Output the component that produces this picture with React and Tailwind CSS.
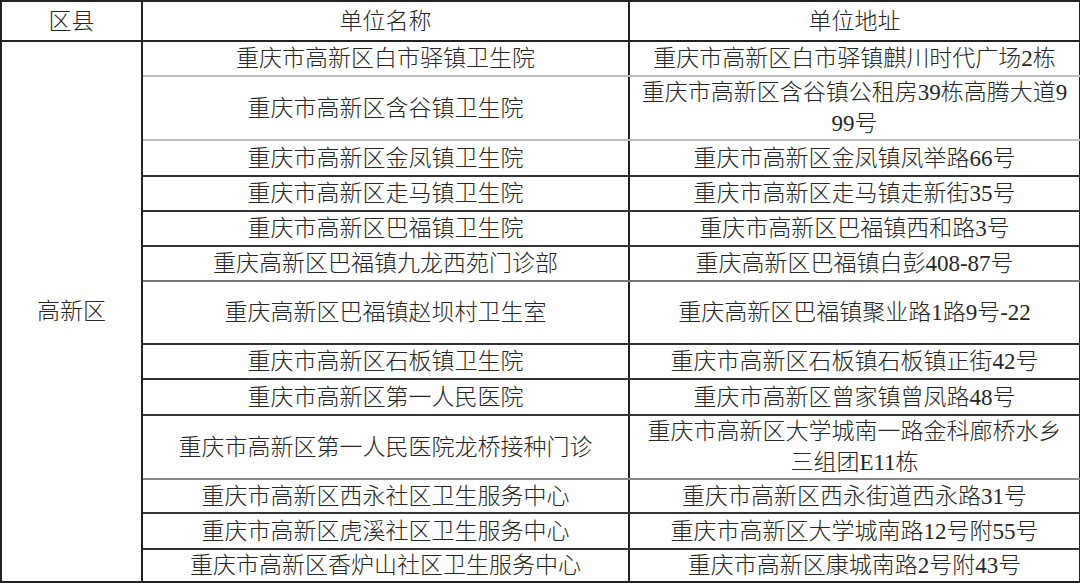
const rows = [
  { name: "重庆市高新区白市驿镇卫生院", addr: ["重庆市高新区白市驿镇麒川时代广场2栋"], h: "h-[35px]", line: "border-b-[#bdbdbd]" },
  { name: "重庆市高新区含谷镇卫生院", addr: ["重庆市高新区含谷镇公租房39栋高腾大道9", "99号"], h: "h-[63px]", line: "border-b-[#bdbdbd]" },
  { name: "重庆市高新区金凤镇卫生院", addr: ["重庆市高新区金凤镇凤举路66号"], h: "h-[36px]", line: "border-b-[#333]" },
  { name: "重庆市高新区走马镇卫生院", addr: ["重庆市高新区走马镇走新街35号"], h: "h-[35px]", line: "border-b-[#333]" },
  { name: "重庆市高新区巴福镇卫生院", addr: ["重庆市高新区巴福镇西和路3号"], h: "h-[35px]", line: "border-b-[#333]" },
  { name: "重庆高新区巴福镇九龙西苑门诊部", addr: ["重庆高新区巴福镇白彭408-87号"], h: "h-[35px]", line: "border-b-[#777]" },
  { name: "重庆高新区巴福镇赵坝村卫生室", addr: ["重庆高新区巴福镇聚业路1路9号-22"], h: "h-[63px]", line: "border-b-[#333]" },
  { name: "重庆市高新区石板镇卫生院", addr: ["重庆市高新区石板镇石板镇正街42号"], h: "h-[35px]", line: "border-b-[#333]" },
  { name: "重庆市高新区第一人民医院", addr: ["重庆市高新区曾家镇曾凤路48号"], h: "h-[36px]", line: "border-b-[#333]" },
  { name: "重庆市高新区第一人民医院龙桥接种门诊", addr: ["重庆市高新区大学城南一路金科廊桥水乡", "三组团E11栋"], h: "h-[64px]", line: "border-b-[#888]" },
  { name: "重庆市高新区西永社区卫生服务中心", addr: ["重庆市高新区西永街道西永路31号"], h: "h-[34px]", line: "border-b-[#333]" },
  { name: "重庆市高新区虎溪社区卫生服务中心", addr: ["重庆市高新区大学城南路12号附55号"], h: "h-[36px]", line: "border-b-[#333]" },
  { name: "重庆市高新区香炉山社区卫生服务中心", addr: ["重庆市高新区康城南路2号附43号"], h: "h-[33px]", line: "border-b-[#222]" },
];

const App = () => {
  return (
    <div className="h-[583px] w-[1080px] overflow-hidden bg-white font-['Liberation_Serif','Noto_Sans_CJK_SC',serif] text-[23px] font-light leading-[31px] text-[#262626]">
      <table className="w-[1079px] table-fixed border-collapse">
        <colgroup>
          <col className="w-[141px]" />
          <col className="w-[487px]" />
          <col className="w-[451px]" />
        </colgroup>
        <thead>
          <tr className="h-[40px]">
            <th className="border-2 border-[#222] p-0 text-center font-light">区县</th>
            <th className="border-2 border-[#222] p-0 text-center font-light">单位名称</th>
            <th className="border-2 border-[#222] p-0 text-center font-light">单位地址</th>
          </tr>
        </thead>
        <tbody>
          {rows.map((row, i) => (
            <tr key={row.name} className={row.h}>
              {i === 0 && (
                <td rowSpan={rows.length} className="border-2 border-[#222] p-0 text-center align-middle">
                  高新区
                </td>
              )}
              <td className={`border-x-2 border-b-2 border-x-[#222] p-0 text-center align-middle whitespace-nowrap ${row.line}`}>
                {row.name}
              </td>
              <td className={`border-x-2 border-b-2 border-x-[#222] p-0 text-center align-middle whitespace-nowrap ${row.line}`}>
                {row.addr.map((a) => (
                  <div key={a}>{a}</div>
                ))}
              </td>
            </tr>
          ))}
        </tbody>
      </table>
    </div>
  );
};

export default App;
